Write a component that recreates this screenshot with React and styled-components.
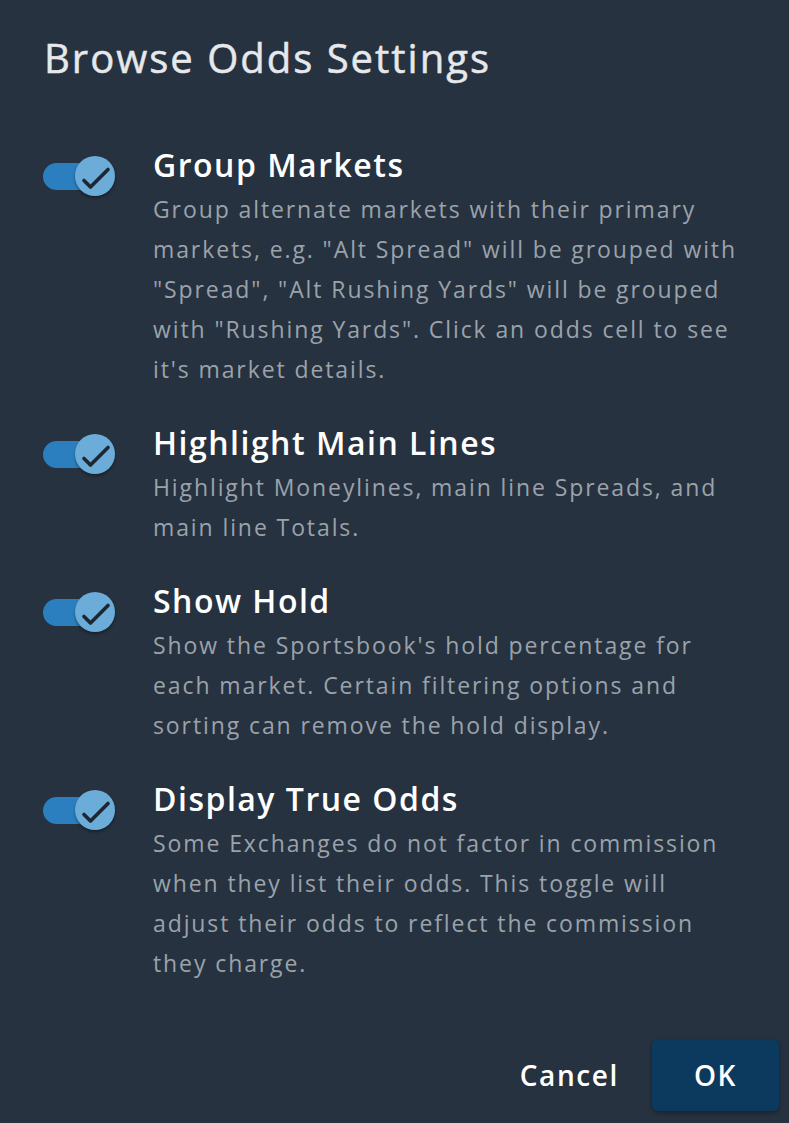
import styled, { createGlobalStyle } from "styled-components";

const GlobalStyle = createGlobalStyle`
  html, body {
    margin: 0;
    background: #263240;
  }
  body {
    font-family: "Open Sans", "Liberation Sans", sans-serif;
    -webkit-font-smoothing: antialiased;
  }
`;

const settings = [
  {
    title: "Group Markets",
    text: 'Group alternate markets with their primary markets, e.g. "Alt Spread" will be grouped with "Spread", "Alt Rushing Yards" will be grouped with "Rushing Yards". Click an odds cell to see it\'s market details.',
  },
  {
    title: "Highlight Main Lines",
    text: "Highlight Moneylines, main line Spreads, and main line Totals.",
  },
  {
    title: "Show Hold",
    text: "Show the Sportsbook's hold percentage for each market. Certain filtering options and sorting can remove the hold display.",
  },
  {
    title: "Display True Odds",
    text: "Some Exchanges do not factor in commission when they list their odds. This toggle will adjust their odds to reflect the commission they charge.",
  },
];

const Check = () => (
  <svg width="40" height="40" viewBox="0 0 40 40">
    <polyline
      points="9,24.5 15.5,31 33,13.5"
      fill="none"
      stroke="#1d2631"
      strokeWidth="3.6"
      strokeLinecap="round"
      strokeLinejoin="round"
    />
  </svg>
);

const App = () => {
  return (
    <>
      <GlobalStyle />
      <Dialog>
        <Title>Browse Odds Settings</Title>
        <List>
          {settings.map((s) => (
            <Row key={s.title}>
              <Toggle>
                <Track />
                <Thumb>
                  <Check />
                </Thumb>
              </Toggle>
              <Body>
                <Heading>{s.title}</Heading>
                <Text>{s.text}</Text>
              </Body>
            </Row>
          ))}
        </List>
        <Actions>
          <TextButton>Cancel</TextButton>
          <PrimaryButton>OK</PrimaryButton>
        </Actions>
      </Dialog>
    </>
  );
};

export default App;

const Dialog = styled.div`
  box-sizing: border-box;
  width: 789px;
  min-height: 1123px;
  padding: 34px 10px 11px 43px;
  display: flex;
  flex-direction: column;
`;

const Title = styled.h2`
  margin: 0 0 0 1px;
  font-size: 40px;
  line-height: 48px;
  font-weight: 400;
  letter-spacing: 2px;
  color: #e6e8eb;
  -webkit-text-stroke: 0.5px #e6e8eb;
`;

const List = styled.div`
  margin-top: 59px;
  display: flex;
  flex-direction: column;
  gap: 30px;
`;

const Row = styled.div`
  display: flex;
  align-items: flex-start;
`;

const Toggle = styled.div`
  position: relative;
  flex: none;
  width: 72px;
  height: 40px;
  margin: 15px 38px 0 0;
`;

const Track = styled.div`
  position: absolute;
  left: 0;
  top: 7px;
  width: 56px;
  height: 27px;
  border-radius: 14px;
  background: #2b7fbf;
`;

const Thumb = styled.div`
  position: absolute;
  right: 0;
  top: 0;
  width: 40px;
  height: 40px;
  border-radius: 50%;
  background: #6badd8;
  box-shadow: 0 2px 3px rgba(0, 0, 0, 0.35);
`;

const Body = styled.div`
  flex: 1;
  max-width: 592px;
`;

const Heading = styled.div`
  font-size: 32px;
  line-height: 48px;
  font-weight: 600;
  letter-spacing: 1.5px;
  color: #ffffff;
`;

const Text = styled.div`
  font-size: 23px;
  line-height: 40px;
  letter-spacing: 1.9px;
  color: #9ba2aa;
`;

const Actions = styled.div`
  margin-top: 56px;
  display: flex;
  justify-content: flex-end;
  align-items: center;
  gap: 17px;
`;

const TextButton = styled.button`
  height: 72px;
  padding: 0 16px;
  border: none;
  background: transparent;
  color: #ffffff;
  font-family: inherit;
  font-size: 28px;
  font-weight: 600;
  letter-spacing: 1.6px;
  cursor: pointer;
`;

const PrimaryButton = styled(TextButton)`
  width: 127px;
  padding: 0;
  border-radius: 6px;
  background: #0b3a5e;
  box-shadow: 0 2px 4px rgba(0, 0, 0, 0.35);
`;
